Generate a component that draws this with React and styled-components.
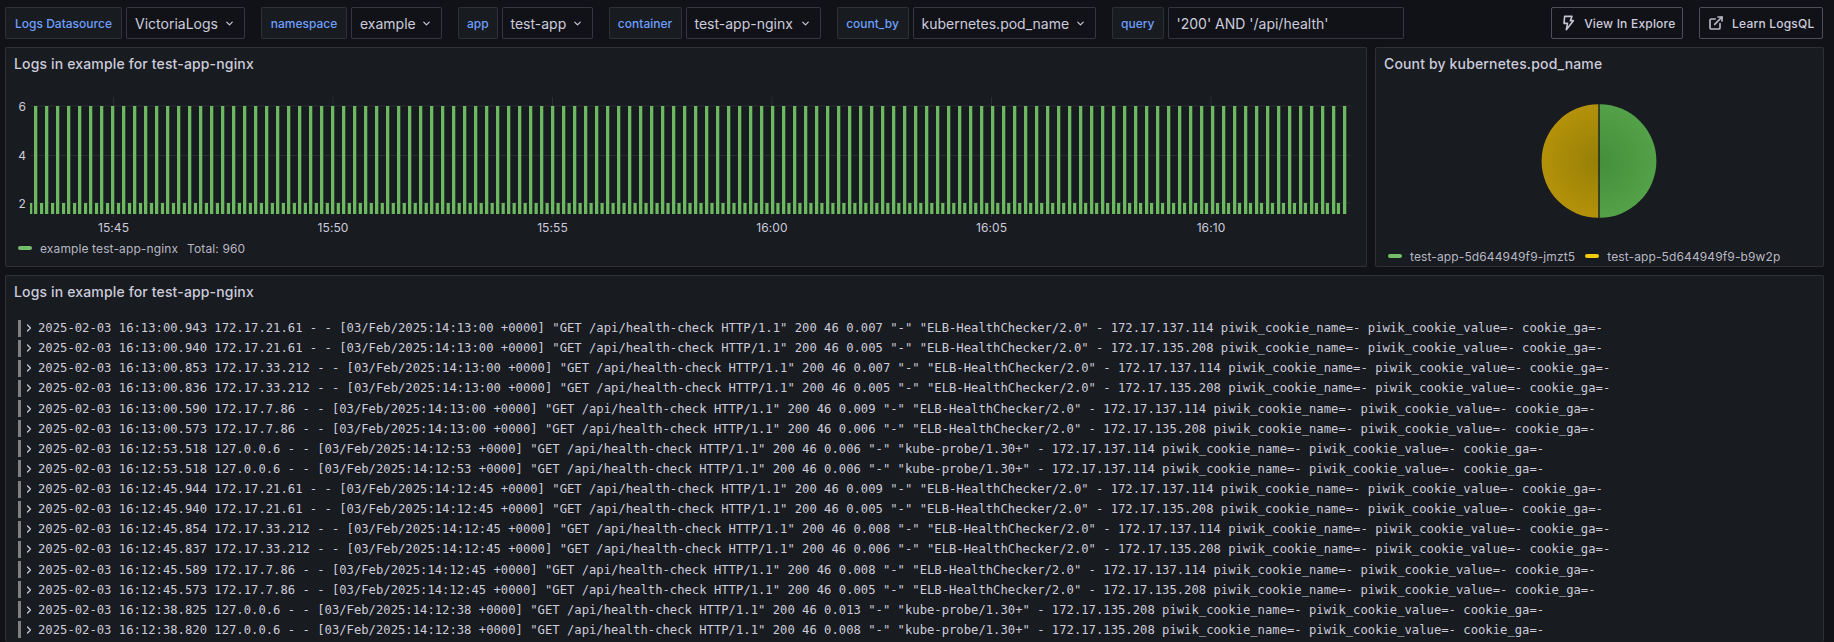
import React from 'react';
import styled, { createGlobalStyle } from 'styled-components';
import { ChevronDown, ChevronRight } from 'lucide-react';

const Global = createGlobalStyle`
  html, body { margin: 0; padding: 0; background: #111217; height: 642px; overflow: hidden; }
  body { font-family: Inter, "Noto Sans", sans-serif; color: #ccccdc; }
`;

const Page = styled.div`
  width: 1834px;
  height: 642px;
  overflow: hidden;
  padding: 7px 10.5px 0 5px;
  box-sizing: border-box;
  display: flex;
  flex-direction: column;
  gap: 8px;
`;

const Toolbar = styled.div`
  display: flex;
  align-items: center;
  height: 32px;
`;

const VarGroup = styled.div`
  display: flex;
  gap: 4px;
  margin-right: 16px;
`;

const VarLabel = styled.label`
  display: flex;
  align-items: center;
  justify-content: center;
  box-sizing: border-box;
  height: 32px;
  width: ${p => p.$w}px;
  background: #181b1f;
  border: 1px solid rgba(204, 204, 220, 0.12);
  border-radius: 2px;
  color: #6e9fff;
  font-size: 12px;
  font-weight: 500;
  white-space: nowrap;
`;

const Select = styled.div`
  display: flex;
  align-items: center;
  justify-content: space-between;
  box-sizing: border-box;
  height: 32px;
  width: ${p => p.$w}px;
  padding: 0 9px 0 8px;
  background: #111217;
  border: 1px solid rgba(204, 204, 220, 0.2);
  border-radius: 2px;
  font-size: 14px;
  color: #ccccdc;
  white-space: nowrap;
`;

const QueryInput = styled(Select)`
  justify-content: flex-start;
`;

const Actions = styled.div`
  margin-left: auto;
  margin-right: 1px;
  display: flex;
  gap: 16.6px;
`;

const LinkButton = styled.div`
  display: flex;
  align-items: center;
  gap: 8px;
  box-sizing: border-box;
  height: 32px;
  width: ${p => p.$w}px;
  padding: 0 8px;
  border: 1px solid rgba(204, 204, 220, 0.32);
  border-radius: 2px;
  font-size: 12px;
  letter-spacing: 0.2px;
  font-weight: 500;
  color: #ccccdc;
  white-space: nowrap;
`;

const ButtonIcon = styled.svg`
  flex: none;
  width: 16px;
  height: 16px;
  fill: none;
  stroke-linejoin: round;
  stroke-linecap: round;
`;

const TopRow = styled.div`
  display: grid;
  grid-template-columns: 1362px 1fr;
  gap: 8px;
  height: 220px;
`;

const Panel = styled.section`
  display: flex;
  flex-direction: column;
  box-sizing: border-box;
  background: #181b1f;
  border: 1px solid rgba(204, 204, 220, 0.12);
  border-radius: 2px;
  min-width: 0;
`;

const LogsPanel = styled(Panel)`
  flex: 1;
  min-height: 0;
  overflow: hidden;
  border-bottom: 0;
`;

const PanelTitle = styled.h2`
  margin: 0;
  padding: 0 8px;
  height: 32px;
  line-height: 32px;
  flex: none;
  font-size: 14px;
  font-weight: 500;
  letter-spacing: 0.15px;
  color: #ccccdc;
`;

const ChartSvg = styled.svg`
  display: block;
  flex: none;
  margin-top: 5px;
  font-family: Inter, sans-serif;
  font-size: 12px;
  letter-spacing: 0.1px;
  text { fill: #ccccdc; }
`;

const Legend = styled.div`
  display: flex;
  align-items: center;
  height: 20px;
  padding: 0 12px;
  font-size: 12px;
  letter-spacing: 0.12px;
  color: rgba(204, 204, 220, 0.9);
  white-space: nowrap;
`;

const LegendItem = styled.div`
  display: flex;
  align-items: center;
  margin-right: ${p => p.$gap}px;
`;

const Swatch = styled.i`
  display: block;
  width: 14px;
  height: 4px;
  border-radius: 2px;
  margin-right: 8px;
  background: ${p => p.$color};
`;

const PieWrap = styled.div`
  flex: 1;
  display: flex;
  justify-content: center;
  padding-top: 23px;
`;

const LogList = styled.div`
  margin-top: 10px;
  padding-left: 12px;
  display: flex;
  flex-direction: column;
`;

const LogRow = styled.div`
  display: flex;
  align-items: center;
  flex: none;
  height: 20.13px;
  font-family: "DejaVu Sans Mono", "Liberation Mono", monospace;
  font-size: 12.21px;
  color: #ccccdc;
  white-space: pre;
`;

const LevelBar = styled.i`
  display: block;
  flex: none;
  width: 3px;
  height: 17px;
  background: #808080;
`;

const Chevron = styled(ChevronRight)`
  flex: none;
  margin: 0 3px 0 2px;
  width: 12px;
  height: 12px;
`;

const vars = [
  ['Logs Datasource', 117, 'VictoriaLogs', 119],
  ['namespace', 86, 'example', 91],
  ['app', 39.5, 'test-app', 91],
  ['container', 73, 'test-app-nginx', 135],
  ['count_by', 72, 'kubernetes.pod_name', 183.5],
];

const TICKS = ['15:45', '15:50', '15:55', '16:00', '16:05', '16:10'];

const Bolt = () => (
  <ButtonIcon viewBox="0 0 24 24" stroke="#c4c4d2" strokeWidth="2.4">
    <path d="M7 2h11l-2.5 6.5H20L9.5 22l1.8-9.5H6z" />
  </ButtonIcon>
);

const External = () => (
  <ButtonIcon viewBox="0 0 24 24" stroke="#b9b9c6" strokeWidth="2.5">
    <path d="M18 13v6a2 2 0 0 1-2 2H5a2 2 0 0 1-2-2V8a2 2 0 0 1 2-2h6" />
    <path d="M15 3h6v6" />
    <path d="M10 14 21 3" />
  </ButtonIcon>
);

function Chart() {
  // Coordinates are relative to the svg, whose origin is at page (6, 85).
  const ox = 6, oy = 85;
  const shorts = Array.from({ length: 120 }, (_, i) => {
    const x = 40 + 10.99 * (i - 1);
    return i === 0 ? { x: 30, w: 2.3 } : { x, w: 3.2 };
  });
  const talls = Array.from({ length: 120 }, (_, i) => 34 + 11 * i);
  return (
    <ChartSvg width="1360" height="153" viewBox={`${ox} ${oy} 1360 153`}>
      {[[106, '6'], [155.5, '4'], [203, '2']].map(([y, t]) => (
        <g key={t}>
          <line x1="30" x2="1351" y1={y} y2={y} stroke="rgba(204,204,220,0.1)" />
          <text x="26" y={y + 4.5} textAnchor="end">{t}</text>
        </g>
      ))}
      {TICKS.map((t, i) => {
        const x = 113.5 + 219.5 * i;
        return (
          <g key={t}>
            <line x1={x} x2={x} y1="97" y2="217" stroke="rgba(204,204,220,0.1)" />
            <text x={x} y="232" textAnchor="middle">{t}</text>
          </g>
        );
      })}
      {shorts.map((b, i) => (
        <rect key={i} x={b.x} y="203" width={b.w} height="11" fill="#6cb962" />
      ))}
      {talls.map((x, i) => (
        <rect key={i} x={x} y="106" width="3.3" height="108" fill="#6cb962" />
      ))}
    </ChartSvg>
  );
}

function Pie() {
  return (
    <svg width="116" height="116" viewBox="-58 -58 116 116">
      <defs>
        <radialGradient id="g1" cx="0" cy="0" r="57" gradientUnits="userSpaceOnUse">
          <stop offset="0" stopColor="#458e3b" />
          <stop offset="1" stopColor="#53a148" />
        </radialGradient>
        <radialGradient id="g2" cx="0" cy="0" r="57" gradientUnits="userSpaceOnUse">
          <stop offset="0" stopColor="#958006" />
          <stop offset="1" stopColor="#b4910a" />
        </radialGradient>
      </defs>
      <path d="M0.7 -56.7 A56.7 56.7 0 0 1 0.7 56.7 Z" fill="url(#g1)" />
      <path d="M-0.7 -56.7 A56.7 56.7 0 0 0 -0.7 56.7 Z" fill="url(#g2)" />
    </svg>
  );
}

const LOG_RAW = [
  ['16:13:00.943', '172.17.21.61', '14:13:00', '0.007', 'E', '172.17.137.114'],
  ['16:13:00.940', '172.17.21.61', '14:13:00', '0.005', 'E', '172.17.135.208'],
  ['16:13:00.853', '172.17.33.212', '14:13:00', '0.007', 'E', '172.17.137.114'],
  ['16:13:00.836', '172.17.33.212', '14:13:00', '0.005', 'E', '172.17.135.208'],
  ['16:13:00.590', '172.17.7.86', '14:13:00', '0.009', 'E', '172.17.137.114'],
  ['16:13:00.573', '172.17.7.86', '14:13:00', '0.006', 'E', '172.17.135.208'],
  ['16:12:53.518', '127.0.0.6', '14:12:53', '0.006', 'K', '172.17.137.114'],
  ['16:12:53.518', '127.0.0.6', '14:12:53', '0.006', 'K', '172.17.137.114'],
  ['16:12:45.944', '172.17.21.61', '14:12:45', '0.009', 'E', '172.17.137.114'],
  ['16:12:45.940', '172.17.21.61', '14:12:45', '0.005', 'E', '172.17.135.208'],
  ['16:12:45.854', '172.17.33.212', '14:12:45', '0.008', 'E', '172.17.137.114'],
  ['16:12:45.837', '172.17.33.212', '14:12:45', '0.006', 'E', '172.17.135.208'],
  ['16:12:45.589', '172.17.7.86', '14:12:45', '0.008', 'E', '172.17.137.114'],
  ['16:12:45.573', '172.17.7.86', '14:12:45', '0.005', 'E', '172.17.135.208'],
  ['16:12:38.825', '127.0.0.6', '14:12:38', '0.013', 'K', '172.17.135.208'],
  ['16:12:38.820', '127.0.0.6', '14:12:38', '0.008', 'K', '172.17.135.208'],
];

const logLine = ([ts, ip, t, dur, ua, up]) =>
  `2025-02-03 ${ts} ${ip} - - [03/Feb/2025:${t} +0000] "GET /api/health-check HTTP/1.1" 200 46 ${dur} "-" "${ua === 'E' ? 'ELB-HealthChecker/2.0' : 'kube-probe/1.30+'}" - ${up} piwik_cookie_name=- piwik_cookie_value=- cookie_ga=-`;

export default function App() {
  return (
    <>
      <Global />
      <Page>
        <Toolbar>
          {vars.map(([label, lw, value, sw]) => (
            <VarGroup key={label}>
              <VarLabel $w={lw}>{label}</VarLabel>
              <Select $w={sw}>
                {value}
                <ChevronDown size={11} strokeWidth={2.5} />
              </Select>
            </VarGroup>
          ))}
          <VarGroup>
            <VarLabel $w={51.5}>query</VarLabel>
            <QueryInput $w={236.5}>'200' AND '/api/health'</QueryInput>
          </VarGroup>
          <Actions>
            <LinkButton $w={131.4}><Bolt />View In Explore</LinkButton>
            <LinkButton $w={123.4}><External />Learn LogsQL</LinkButton>
          </Actions>
        </Toolbar>
        <TopRow>
          <Panel>
            <PanelTitle>Logs in example for test-app-nginx</PanelTitle>
            <Chart />
            <Legend>
              <LegendItem $gap={9}><Swatch $color="#73bf69" />example test-app-nginx</LegendItem>
              <span>Total: 960</span>
            </Legend>
          </Panel>
          <Panel>
            <PanelTitle>Count by kubernetes.pod_name</PanelTitle>
            <PieWrap><Pie /></PieWrap>
            <Legend>
              <LegendItem $gap={10}><Swatch $color="#73bf69" />test-app-5d644949f9-jmzt5</LegendItem>
              <LegendItem $gap={0}><Swatch $color="#f2cc0c" />test-app-5d644949f9-b9w2p</LegendItem>
            </Legend>
          </Panel>
        </TopRow>
        <LogsPanel>
          <PanelTitle>Logs in example for test-app-nginx</PanelTitle>
          <LogList>
            {LOG_RAW.map((r, i) => (
              <LogRow key={i}>
                <LevelBar />
                <Chevron strokeWidth={2.5} />
                {logLine(r)}
              </LogRow>
            ))}
            <LogRow><LevelBar /></LogRow>
          </LogList>
        </LogsPanel>
      </Page>
    </>
  );
}
